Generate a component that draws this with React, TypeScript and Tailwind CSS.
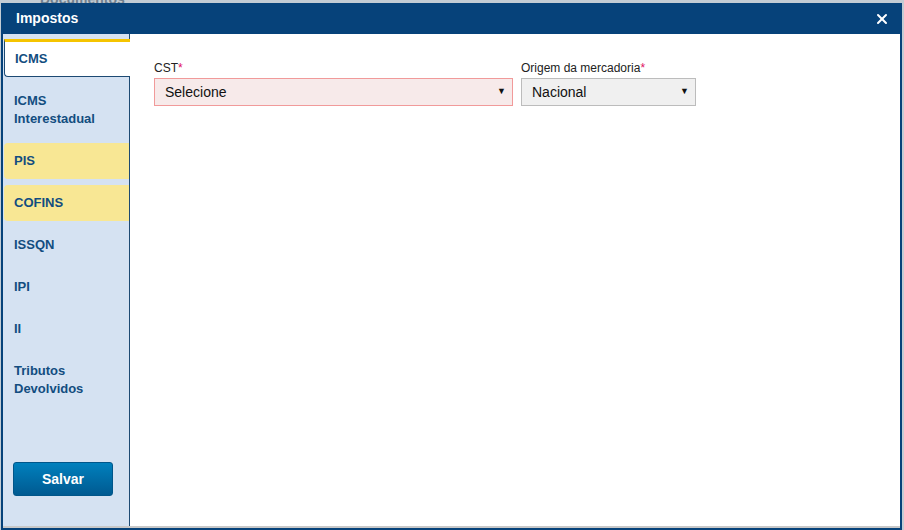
import { X } from 'lucide-react';

const tabs = [
    { label: ['ICMS'], active: true },
    { label: ['ICMS', 'Interestadual'] },
    { label: ['PIS'], warn: true },
    { label: ['COFINS'], warn: true },
    { label: ['ISSQN'] },
    { label: ['IPI'] },
    { label: ['II'] },
    { label: ['Tributos', 'Devolvidos'] },
];

function Select({ value, error, width }: { value: string; error?: boolean; width: string }) {
    return (
        <div
            className={`${width} h-[28px] flex items-center justify-between pl-[10px] pr-[6px] border text-[14px] text-[#111] ${
                error ? 'bg-[#f7eaea] border-[#f19a9a]' : 'bg-[#f0f0f0] border-[#bcbcbc]'
            }`}
        >
            <span>{value}</span>
            <span className="text-[9px] text-[#111]">▼</span>
        </div>
    );
}

export default function App() {
    return (
        <div
            className="w-[904px] h-[530px] bg-[#c3ccd4] pt-[3px] overflow-hidden relative"
            style={{ fontFamily: '"Liberation Sans", Arial, sans-serif' }}
        >
            <div className="absolute top-[-11px] left-[40px] text-[14px] text-[#6f7f8e] font-bold">Documentos</div>
            <div className="relative ml-px w-[901px] h-[527px] bg-[#06427a] px-[2px] pb-[2px] flex flex-col">
                <header className="h-[31px] shrink-0 flex items-center justify-between pl-[13px] pr-[10px]">
                    <h1 className="text-white text-[14px] font-bold">Impostos</h1>
                    <X size={16} strokeWidth={3} className="text-white" />
                </header>

                <div className="flex-1 flex bg-white border-b-2 border-[#c8c8c8] min-h-0">
                    <aside className="w-[127px] shrink-0 bg-[#d5e2f2] border-r border-[#1d4a73] pt-[5px] pl-px flex flex-col">
                        <div className="flex flex-col gap-[6px]">
                            {tabs.map((t, i) => (
                                <div
                                    key={i}
                                    className={`rounded-l-[4px] pl-[10px] py-[9px] text-[13px] font-bold leading-[18px] text-[#124d80] ${
                                        t.active
                                            ? 'relative z-10 -mr-px bg-white border-l border-b border-[#1d4a73] border-t-[3px] border-t-[#f5c400] pt-[8px] pb-[8px] rounded-tl-none'
                                            : t.warn
                                              ? 'bg-[#f8e794]'
                                              : ''
                                    }`}
                                >
                                    {t.label.map((l) => (
                                        <div key={l}>{l}</div>
                                    ))}
                                </div>
                            ))}
                        </div>
                        <div className="mt-auto mb-[30px] pl-[9px]">
                            <button className="w-[100px] h-[34px] rounded-[3px] bg-gradient-to-b from-[#0080bd] to-[#005a91] border border-[#00568a] text-white text-[14px] font-bold">
                                Salvar
                            </button>
                        </div>
                    </aside>

                    <main className="flex-1 pl-[24px] pt-[27px] flex gap-[8px] items-start">
                        <div className="flex flex-col gap-[3px]">
                            <label className="text-[12px] text-[#222] leading-[14px]">
                                CST<span className="text-[#e0115f]">*</span>
                            </label>
                            <Select value="Selecione" error width="w-[359px]" />
                        </div>
                        <div className="flex flex-col gap-[3px]">
                            <label className="text-[12px] text-[#222] leading-[14px]">
                                Origem da mercadoria<span className="text-[#e0115f]">*</span>
                            </label>
                            <Select value="Nacional" width="w-[175px]" />
                        </div>
                    </main>
                </div>
            </div>
        </div>
    );
}
